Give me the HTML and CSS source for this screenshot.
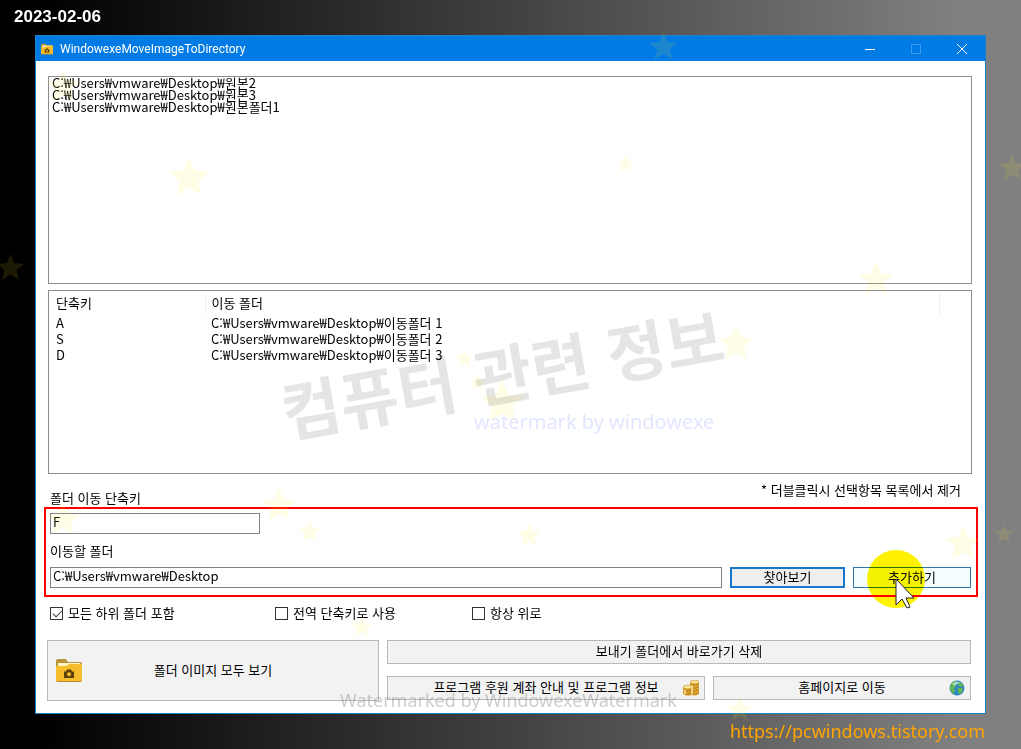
FILE: index.html
```html
<!DOCTYPE html>
<html lang="ko">
<head>
<meta charset="utf-8">
<title>WindowexeMoveImageToDirectory</title>
<link rel="stylesheet" href="styles.css">
</head>
<body>
<svg class="defs" aria-hidden="true">
  <symbol id="star" viewBox="0 0 40 40"><path d="M20 0 25.500 13.500 40 14.700 29 24 32.300 38 20 30.500 7.700 38 11 24 0 14.700 14.500 13.500Z"/></symbol>
  <symbol id="folder" viewBox="0 0 26 23">
    <path d="M0 2Q0 0 2 0H10L12 3H24Q26 3 26 5V12H0Z" fill="#b8963c"/>
    <path d="M2 4H24V9H2Z" fill="#fff3c4"/>
    <path d="M0 7H11L13 5H26V21Q26 23 24 23H2Q0 23 0 21Z" fill="#f6bd2c"/>
    <path d="M0 21Q0 23 2 23H24Q26 23 26 21V20.500Q26 22 24 22H2Q0 22 0 20.500Z" fill="#b98a2c"/>
    <path d="M8 12.500H10L11 10.500H15L16 12.500H18V19H8Z" fill="#5c4108"/>
    <circle cx="13" cy="15.300" r="2" fill="#f6bd2c"/>
  </symbol>
</svg>
<time class="date" datetime="2023-02-06">2023-02-06</time>
<main class="window">
  <header class="titlebar">
    <svg class="app-icon" aria-hidden="true"><use href="#folder"/></svg>
    <h1>WindowexeMoveImageToDirectory</h1>
    <button class="caption" aria-label="최소화"><svg viewBox="0 0 10 10"><path d="M0 5.500H10"/></svg></button>
    <button class="caption" aria-label="최대화" disabled><svg viewBox="0 0 10 10"><path d="M.5 .5H9.500V9.500H.5Z"/></svg></button>
    <button class="caption" aria-label="닫기"><svg viewBox="0 0 10 10"><path d="M0 0 10 10M10 0 0 10"/></svg></button>
  </header>
  <div class="content">
    <ul class="panel sources">
      <li>C:₩Users₩vmware₩Desktop₩원본2</li>
      <li>C:₩Users₩vmware₩Desktop₩원본3</li>
      <li>C:₩Users₩vmware₩Desktop₩원본폴더1</li>
    </ul>
    <div class="panel targets">
      <table>
        <thead><tr><th class="key">단축키</th><th>이동 폴더</th></tr></thead>
        <tbody>
          <tr><td>A</td><td>C:₩Users₩vmware₩Desktop₩이동폴더 1</td></tr>
          <tr><td>S</td><td>C:₩Users₩vmware₩Desktop₩이동폴더 2</td></tr>
          <tr><td>D</td><td>C:₩Users₩vmware₩Desktop₩이동폴더 3</td></tr>
        </tbody>
      </table>
    </div>
    <div class="captions">
      <label for="shortcut">폴더 이동 단축키</label>
      <p>* 더블클릭시 선택항목 목록에서 제거</p>
    </div>
    <section class="highlight">
      <input class="field short" id="shortcut" value="F">
      <label class="folder-label" for="folder-path">이동할 폴더</label>
      <div class="path-row">
        <input class="field" id="folder-path" value="C:₩Users₩vmware₩Desktop">
        <button class="btn browse">찾아보기</button>
        <button class="btn add">추가하기</button>
      </div>
      <svg class="pointer" viewBox="0 0 60 60" aria-hidden="true">
        <circle cx="30" cy="30" r="29" fill="#fff200"/>
      </svg>
      <svg class="arrow" viewBox="0 0 22 32" aria-hidden="true">
        <path d="M1 1V27L7 21L12 30L15 29L11 20H19Z" fill="#fff" stroke="#222"/>
      </svg>
    </section>
    <div class="options">
      <label><input type="checkbox" checked>모든 하위 폴더 포함</label>
      <label><input type="checkbox">전역 단축키로 사용</label>
      <label><input type="checkbox">항상 위로</label>
    </div>
    <div class="actions">
      <button class="btn show"><svg class="folder" aria-hidden="true"><use href="#folder"/></svg><span>폴더 이미지 모두 보기</span></button>
      <button class="btn remove">보내기 폴더에서 바로가기 삭제</button>
      <button class="btn info"><span>프로그램 후원 계좌 안내 및 프로그램 정보</span>
        <svg class="small-icon" viewBox="0 0 16 16" aria-hidden="true">
          <path d="M7 2V14Q11.500 17 16 14V2Z" fill="#dda52f"/>
          <path d="M0 7V14Q4 17 8.500 15V7Z" fill="#d99b28"/>
          <path d="M7 4Q11.500 6.500 16 4M7 7Q11.500 9.500 16 7M7 10Q11.500 12.500 16 10M7 13Q11.500 15.500 16 13M1 10Q4 12.500 8 10M0 13Q4 15.500 8 13" fill="none" stroke="#a87420" stroke-width=".7"/>
          <ellipse cx="11.500" cy="2" rx="4.500" ry="1.800" fill="#ffe59a" stroke="#c58b22" stroke-width=".6"/>
          <ellipse cx="4.500" cy="7" rx="4.300" ry="1.800" fill="#ffe59a" stroke="#c58b22" stroke-width=".6"/>
          <path d="M9 5.500V14M2 10V14" stroke="#ffe9a4" stroke-width="1.500"/>
        </svg>
      </button>
      <button class="btn home"><span>홈페이지로 이동</span>
        <svg class="small-icon" viewBox="0 0 16 16" aria-hidden="true">
          <circle cx="8" cy="8" r="7.500" fill="#2f86c6"/>
          <path d="M2 4Q4 1 7 1L9 3L6 5L7 7L4 8L6 10L5 14Q1 12 1 8ZM10 2Q14 3 15 7L13 6L11 7L9 5ZM9 8L13 8L14 10L11 14L9 13Z" fill="#63b84a"/>
          <path d="M3 4Q7 0 12 3Q8 3 6 6Z" fill="#d9f3ff" opacity=".65"/>
        </svg>
      </button>
    </div>
  </div>
</main>
<a class="site" href="https://pcwindows.tistory.com">https://pcwindows.tistory.com</a>
<div class="overlay" aria-hidden="true">
  <svg class="stars" viewBox="0 0 1021 749">
    <use href="#star" x="649" y="32" width="29" height="29"/>
    <use href="#star" x="46" y="69" width="34" height="34"/>
    <use href="#star" x="169" y="157" width="40" height="40"/>
    <use href="#star" x="617" y="155" width="17" height="17"/>
    <use href="#star" x="999" y="154" width="27" height="27"/>
    <use href="#star" x="-3" y="254" width="27" height="27"/>
    <use href="#star" x="858" y="261" width="36" height="36"/>
    <use href="#star" x="718" y="325" width="36" height="36"/>
    <use href="#star" x="455" y="349" width="19" height="19"/>
    <use href="#star" x="469" y="374" width="17" height="17"/>
    <use href="#star" x="480" y="380" width="44" height="44"/>
    <use href="#star" x="46" y="502" width="34" height="34"/>
    <use href="#star" x="262" y="488" width="34" height="34"/>
    <use href="#star" x="299" y="520" width="22" height="22"/>
    <use href="#star" x="517" y="523" width="24" height="24"/>
    <use href="#star" x="945" y="525" width="36" height="36"/>
    <use href="#star" x="995" y="525" width="18" height="18"/>
    <use href="#star" x="351" y="616" width="21" height="21"/>
    <use href="#star" x="727" y="697" width="25" height="25"/>
  </svg>
  <span class="mark big">컴퓨터 관련 정보</span>
  <span class="mark blue">watermark by windowexe</span>
  <span class="mark gray">Watermarked by WindowexeWatermark</span>
</div>
</body>
</html>
```

FILE: styles.css
```css
* { box-sizing: border-box; }

body {
  margin: 0;
  min-height: 100vh;
  position: relative;
  display: flex;
  flex-direction: column;
  padding: 0 36px;
  overflow-x: hidden;
  background: linear-gradient(90deg, #000 4%, #808080 94%);
  color: #000;
  font: 13px/16px "Noto Sans CJK KR", sans-serif;
}

button, input { font: inherit; color: inherit; }
h1, p, ul { margin: 0; padding: 0; font: inherit; }

.defs { position: absolute; width: 0; height: 0; }

.date {
  height: 35px;
  margin-left: -22px;
  padding-top: 1px;
  color: #fff;
  font: bold 17px/32px "Liberation Sans", sans-serif;
}

.window {
  flex: 1;
  display: flex;
  flex-direction: column;
  margin: 0 -1px;
  border: 1px solid #1883c8;
  background: #fff;
}

.titlebar {
  display: flex;
  align-items: center;
  height: 25px;
  padding-left: 5px;
  background: #007be5;
  color: #fff;
}
.titlebar h1 { flex: 1; padding-left: 7px; font: 12px/16px "Roboto", sans-serif; }
.app-icon { width: 12px; height: 12px; }
.caption {
  width: 46px;
  height: 24px;
  padding: 0;
  border: 0;
  background: none;
}
.caption svg { display: block; width: 10px; height: 10px; margin: auto; overflow: visible; fill: none; stroke: #fff; }
.caption:disabled svg { stroke: #3d9df5; }

.content {
  flex: 1;
  display: flex;
  flex-direction: column;
  padding: 15px 13px 13px 12px;
}

.panel { border: 1px solid #8b8b90; background: #fff; }

.sources {
  flex: 1 1 208px;
  margin-bottom: 6px;
  padding: 0 3px;
  list-style: none;
  line-height: 12px;
}

.targets { flex: 1 1 184px; padding-top: 2px; }
.targets table { width: 891px; max-width: 100%; border-collapse: collapse; table-layout: fixed; }
.targets th { height: 22px; padding: 0 6px 2px 7px; border-right: 1px solid #f0f0f0; font-weight: 400; text-align: left; }
.targets .key { width: 156px; }
.targets td { height: 16px; padding: 0 7px; }
.targets tr > :nth-child(2) { padding-left: 6px; }

.captions { display: flex; justify-content: space-between; height: 33px; padding: 8px 11px 0 2px; }
.captions label { padding-top: 8px; }

.highlight {
  position: relative;
  margin: 0 -6px 0 -4px;
  padding: 4px 5px 7px 4px;
  border: 2px solid #f00;
}
.field {
  display: block;
  width: 100%;
  min-width: 0;
  height: 21px;
  padding: 0 2px 5px;
  border: 1px solid #838387;
  border-radius: 0;
  background: #fff;
}
.short { width: 210px; }
.folder-label { display: block; padding: 9px 0 8px; }
.path-row { display: grid; grid-template-columns: 1fr 115px 118px; gap: 8px; }

.btn {
  min-width: 0;
  padding: 0 0 2px;
  border: 1px solid #b8b8b8;
  border-radius: 0;
  background: #f2f2f2;
}
.btn.browse { border: 2px solid #1777cc; background: #eee; line-height: 14px; }
.btn.add { border-color: #2f77a8; background: #f5ffff; line-height: 14px; }

.pointer, .arrow { position: absolute; pointer-events: none; }
.pointer { right: 50px; top: 40px; width: 60px; height: 60px; mix-blend-mode: multiply; }
.arrow { right: 59px; top: 69px; width: 22px; height: 32px; }

.options {
  display: grid;
  grid-template-columns: 225px 197px auto;
  padding: 8px 2px 19px;
}
.options label { display: flex; gap: 5px; }
.options input {
  appearance: none;
  width: 13px;
  height: 13px;
  margin: 2px 0 0;
  border: 1px solid #333;
  background: #fff;
}
.options input:checked { position: relative; }
.options input:checked::after {
  content: "";
  position: absolute;
  left: 4px;
  top: 0;
  width: 4px;
  height: 8px;
  border: solid #444;
  border-width: 0 1px 1px 0;
  transform: rotate(45deg);
}

.actions {
  display: grid;
  grid-template-columns: 332fr 318fr 258fr;
  grid-template-rows: 24px 24px;
  gap: 12px 8px;
  margin: 0 1px 0 -1px;
}
.show { position: relative; grid-row: span 2; margin-bottom: -1px; }
.remove { grid-column: span 2; }
.info, .home { position: relative; }
.folder { position: absolute; left: 8px; top: 18px; width: 26px; height: 23px; }
.small-icon { position: absolute; right: 5px; top: 3px; width: 16px; height: 16px; }

.site {
  align-self: flex-end;
  height: 35px;
  color: #ffa500;
  font: 18px/35px "Noto Sans", sans-serif;
  text-decoration: none;
}

.overlay { position: absolute; inset: 0; overflow: hidden; pointer-events: none; }
.stars { position: absolute; left: 0; top: 0; width: 100%; fill: #ffee20; opacity: .11; }
.mark { position: absolute; white-space: nowrap; }
.big {
  left: 278px;
  top: 335px;
  color: rgba(0, 0, 0, .1);
  font: bold 64px/72px "Noto Sans CJK KR", sans-serif;
  transform: rotate(-10deg);
}
.blue { left: 474px; top: 408px; color: #e2e6ff; font: 20px/28px "Noto Sans", sans-serif; }
.gray { left: 340px; top: 688px; color: rgba(130, 130, 130, .4); font: 18px/24px "Noto Sans", sans-serif; }
```
